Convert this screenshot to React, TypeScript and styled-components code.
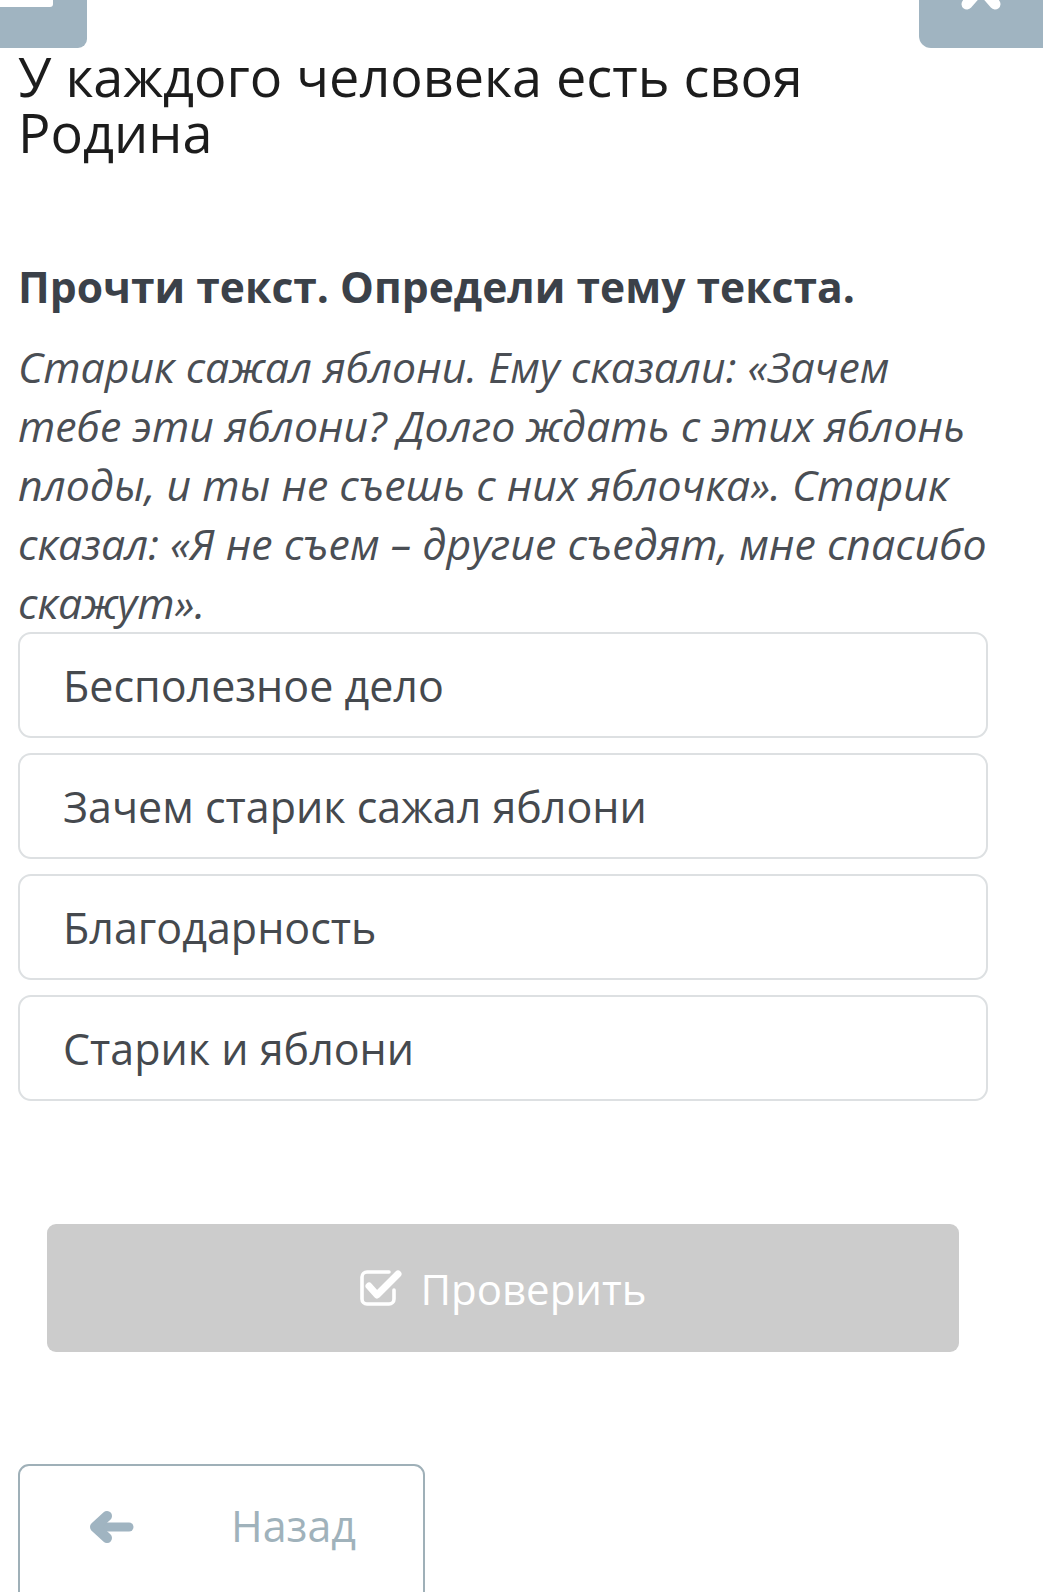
import React from 'react';
import styled, { createGlobalStyle } from 'styled-components';

const GlobalStyle = createGlobalStyle`
  html, body {
    margin: 0;
    padding: 0;
    background: #fff;
  }
  body {
    font-family: 'Open Sans', 'Noto Sans', sans-serif;
  }
`;

const Page = styled.div`
  width: 1043px;
  height: 1592px;
  overflow: hidden;
  display: flex;
  flex-direction: column;
`;

const TopBar = styled.div`
  display: flex;
  justify-content: space-between;
  height: 48px;
`;

const Tab = styled.div<{ $side: 'left' | 'right'; $width: number }>`
  width: ${(p) => p.$width}px;
  height: 48px;
  background: #a0b4c1;
  border-radius: ${(p) => (p.$side === 'left' ? '0 0 9px 0' : '0 0 0 12px')};
  display: flex;
  justify-content: ${(p) => (p.$side === 'left' ? 'flex-start' : 'center')};
  align-items: flex-start;
  overflow: hidden;
`;

const MenuBar = styled.span`
  display: block;
  width: 53px;
  height: 7px;
  background: #fff;
  border-radius: 0 0 3px 0;
`;

const Content = styled.div`
  padding: 0 55px 0 18px;
  display: flex;
  flex-direction: column;
`;

const Title = styled.h1`
  margin: 0;
  font-size: 54px;
  line-height: 56px;
  font-weight: 400;
  color: #1c1c1c;
  max-width: 840px;
`;

const Task = styled.h2`
  margin: 98px 0 0;
  font-size: 42.6px;
  line-height: 57px;
  font-weight: 700;
  color: #3b4149;
`;

const Story = styled.p`
  margin: 22px 0 0;
  font-size: 42.8px;
  line-height: 59px;
  font-style: italic;
  color: #4a4e54;
  width: 975px;
`;

const Options = styled.div`
  display: flex;
  flex-direction: column;
  gap: 15px;
  width: 970px;
`;

const Option = styled.div`
  height: 106px;
  box-sizing: border-box;
  border: 2px solid #dde0e2;
  border-radius: 13px;
  display: flex;
  align-items: center;
  padding-left: 43px;
  font-size: 43px;
  color: #45494e;
`;

const CheckButton = styled.div`
  margin: 123px 0 0 29px;
  width: 912px;
  height: 128px;
  border-radius: 9px;
  background: #cccccc;
  color: #fff;
  display: flex;
  align-items: center;
  justify-content: center;
  gap: 15px;
  font-size: 42px;
`;

const BackButton = styled.div`
  margin-top: 112px;
  width: 407px;
  height: 160px;
  box-sizing: border-box;
  border: 2px solid #9fb0b8;
  border-radius: 11px;
  display: flex;
  align-items: flex-start;
  padding: 30px 0 0 70px;
  gap: 97px;
  font-size: 43px;
  color: #a0b2bb;
`;

const CheckIcon = () => (
  <svg width="46" height="40" viewBox="0 0 46 40">
    <path
      d="M30 4 H8 a5 5 0 0 0 -5 5 V31 a5 5 0 0 0 5 5 H30 a5 5 0 0 0 5 -5 V22"
      fill="none"
      stroke="#fff"
      strokeWidth="3.6"
      strokeLinecap="round"
    />
    <path
      d="M10 18 L18 27 L39 6"
      fill="none"
      stroke="#fff"
      strokeWidth="7"
      strokeLinecap="round"
      strokeLinejoin="round"
    />
  </svg>
);

const ArrowLeft = () => (
  <svg width="44" height="32" viewBox="0 0 44 32" style={{ marginTop: 15 }}>
    <path
      d="M39 16 H10"
      fill="none"
      stroke="#a0b4c1"
      strokeWidth="9"
      strokeLinecap="round"
    />
    <path
      d="M17 5 L5 16 L17 27"
      fill="none"
      stroke="#a0b4c1"
      strokeWidth="10"
      strokeLinecap="round"
      strokeLinejoin="round"
    />
  </svg>
);

const CloseMark = () => (
  <svg width="44" height="48" viewBox="0 0 44 48">
    <path
      d="M10 -26 L36 4 M34 -26 L8 4"
      fill="none"
      stroke="#fff"
      strokeWidth="11"
      strokeLinecap="round"
    />
  </svg>
);

const answers = [
  'Бесполезное дело',
  'Зачем старик сажал яблони',
  'Благодарность',
  'Старик и яблони',
];

export default function App() {
  return (
    <>
      <GlobalStyle />
      <Page>
        <TopBar>
          <Tab $side="left" $width={87}>
            <MenuBar />
          </Tab>
          <Tab $side="right" $width={124}>
            <CloseMark />
          </Tab>
        </TopBar>
        <Content>
          <Title>У каждого человека есть своя Родина</Title>
          <Task>Прочти текст. Определи тему текста.</Task>
          <Story>
            Старик сажал яблони. Ему сказали: «Зачем тебе эти яблони? Долго ждать с этих яблонь
            плоды, и ты не съешь с них яблочка». Старик сказал: «Я не съем – другие съедят, мне
            спасибо скажут».
          </Story>
          <Options>
            {answers.map((a) => (
              <Option key={a}>{a}</Option>
            ))}
          </Options>
          <CheckButton>
            <CheckIcon />
            <span>Проверить</span>
          </CheckButton>
          <BackButton>
            <ArrowLeft />
            <span>Назад</span>
          </BackButton>
        </Content>
      </Page>
    </>
  );
}
